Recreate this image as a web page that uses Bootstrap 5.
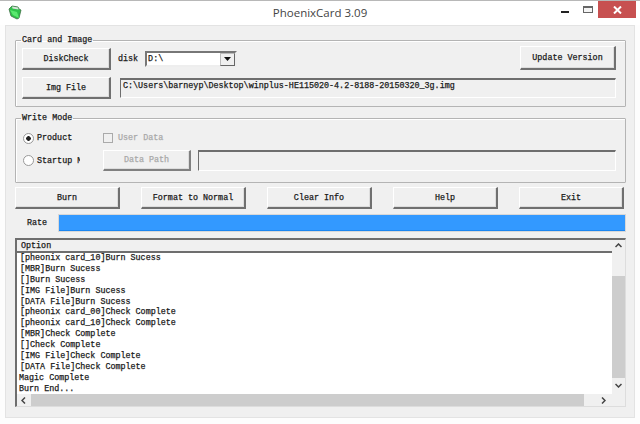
<!DOCTYPE html>
<html lang="en"><head><meta charset="utf-8"><title>PhoenixCard 3.09</title>
<link href="https://cdn.jsdelivr.net/npm/bootstrap@5.3.0/dist/css/bootstrap.min.css" rel="stylesheet">
<style>
html,body{width:640px;height:424px;overflow:hidden;background:#fdfdfd}
body{font:400 8.4px/10px "Liberation Mono",monospace;color:#1a1a1a;-webkit-text-stroke:.25px #1a1a1a}
.winframe{height:424px;border-top:1px solid #b8b8b8;display:flex;flex-direction:column}
.titlebar{height:24px;flex:none;background:#fff;-webkit-text-stroke:0}
.titlebar .side{flex:1 1 0}
.apptitle{font:400 11.5px/24px "Open Sans",sans-serif;color:#444}
.folder{margin:4px 0 0 8px}
.ctl-min{width:8px;height:2px;background:#222;margin:10px 14px 0 0}
.ctl-max{width:10px;height:7px;border:1px solid #666;border-top-width:2px;background:#f4f4f4;margin:5px 5px 0 0}
.ctl-close{width:38px;height:17px;background:#c75050;margin-right:4px;display:flex;align-items:center;justify-content:center}
.client{width:630px;height:393px;margin-left:5px;background:#f0f0f0;border:1px solid #e3e3e3;padding:10px 8px 0 9px;flex:none}
.grp{border:1px solid #b4b4b4;border-radius:1px;padding:0 9px 0 6px;margin:0;width:611px;box-shadow:inset 1px 1px 0 #fff}
.grp legend{float:none;width:auto;font:inherit;margin:0 0 0 -1px;padding:0 1px;line-height:9px}
.grp1{height:71px}
.grp2{height:69px;margin-top:7px}
.btn.winbtn{--bs-btn-padding-y:0;--bs-btn-padding-x:0;font:inherit;color:#1a1a1a;background:#f0f0f0;border:0;border-radius:0;border-top:1px solid #fff;border-left:1px solid #fff;border-right:2px solid #707070;border-bottom:2px solid #707070;height:22px;flex:none;display:flex;align-items:center;justify-content:center;box-shadow:inset -1px -1px 0 #ddd}
.btn.winbtn:disabled{color:#a9a9a9;-webkit-text-stroke-color:#a9a9a9;background:#f0f0f0;opacity:1;border-right-color:#808080;border-bottom-color:#808080;border-top-color:#fff;border-left-color:#fff}
.w-main{width:89px}
.w-ver{width:96px;height:24px!important;margin-top:-2px}
.combo{width:92px;height:16px;margin-left:7px;background:#fff;border:2px solid #777;border-right-color:#eee;border-bottom-color:#eee;display:flex;align-items:center;justify-content:space-between;padding-left:1px}
.combo .arrowbox{width:15px;height:13px;background:#f0f0f0;border:1px solid #bbb;border-right:1px solid #666;border-bottom:1px solid #666;display:flex;align-items:center;justify-content:center}
.sunken{background:#f0f0f0;border-top:2px solid #6e6e6e;border-left:1px solid #6e6e6e;border-right:1px solid #fff;border-bottom:1px solid #fff;height:20px;padding:1px 2px;flex:1 1 auto}
.disk{margin-left:7px}
.row1{margin-top:3px;height:22px}
.row2{margin-top:7px;height:22px}
.pathbox{margin:1px 0 0 9px}
.mode1{margin:7px 0 0 0;height:16px}
.mode2{margin-top:4px;height:21px}
.form-check-input.opt{width:11px;height:11px;margin:0 3px 0 1px;flex:none;border:1px solid #999;background:#fff none;box-shadow:none}
.form-check-input.opt[type=radio]:checked{background:radial-gradient(circle,#222 0 2px,#fff 2.6px);border-color:#999}
.form-check-input.opt[type=checkbox]{border-radius:0;opacity:1;width:10px;height:10px;background:#f0f0f0;border-color:#aaa;margin:0 5px 0 0}
.optcol{width:81px;flex:none}
.clipopt{width:58px;margin-right:23px;flex:none;overflow:hidden;white-space:nowrap}
.muted{color:#a9a9a9;-webkit-text-stroke-color:#a9a9a9}
.btn.w-dpath{width:88px;height:21px}
.pbox2{margin-left:7px;height:21px}
.actions{margin-top:4px;width:609px}
.btn.w-act{width:105px}
.ratebar{margin-top:5px;height:18px;width:611px}
.ratelabel{width:43px;padding-left:12px;flex:none}
.progress.rateprog{height:18px;flex:1 1 auto;border-radius:0;background:#f0f0f0;border:1px solid #d8d8d8}
.progress.rateprog .progress-bar{background:#3399ff;border-bottom:1px solid #1c86f0}
.logbox{margin-top:6px;width:611px;height:169px;border-top:2px solid #6e6e6e;border-left:2px solid #6e6e6e;border-right:1px solid #ddd;border-bottom:1px solid #ddd;display:grid;grid-template-columns:1fr 13px;grid-template-rows:1fr 12px}
.logmain{background:#fff;min-width:0;overflow:hidden}
.loghead{height:13px;background:#f0f0f0;border-bottom:2px solid #6e6e6e;padding-left:4px;line-height:12px}
.logline{line-height:10.9px;height:10.9px;padding-left:3px;white-space:nowrap}
.logline.flush{padding-left:2px}
.vscroll{background:#f0f0f0;display:flex;flex-direction:column;grid-row:1;grid-column:2;min-height:0;overflow:hidden}
.vscroll .arr{height:36px;display:flex;justify-content:center;align-items:flex-start;padding-top:3px;flex:none}
.vscroll .arr.down{height:16px;align-items:flex-end;padding-bottom:6px;padding-top:0}
.vscroll .thumb{background:#cdcdcd;height:102px;flex:none}
.hscroll{background:#f0f0f0;display:flex;align-items:stretch;grid-row:2;grid-column:1}
.hscroll .arr{display:flex;align-items:center;flex:none}
.hscroll .arr.first{width:14px}
.hscroll .arr.last{margin-left:auto;padding-right:6px}
.hscroll .thumb{background:#cdcdcd;width:553px;flex:none}
.hcorner{background:#f0f0f0;grid-row:2;grid-column:2}
</style></head>
<body>
<div class="winframe">
  <div class="titlebar d-flex">
    <div class="side">
      <svg class="folder" width="14" height="15" viewBox="0 0 14 15"><path d="M1 4 4 1l6 1 1 2 2 1-2 8-2 1-6-3z" fill="#2fc24a" stroke="#3f6f46" stroke-width=".8"/><path d="M2 5l7 2 2 6-6-3z" fill="#5be86f"/><path d="M4 1.500l6 1 .5 2-6-1z" fill="#d8e4da"/></svg>
    </div>
    <div class="apptitle">PhoenixCard 3.09</div>
    <div class="side d-flex justify-content-end">
      <div class="ctl-min"></div><div class="ctl-max"></div>
      <div class="ctl-close"><svg width="9" height="8" viewBox="0 0 9 8"><path d="M1 .5l7 7M8 .5l-7 7" stroke="#fff" stroke-width="2"/></svg></div>
    </div>
  </div>
  <div class="client">
    <fieldset class="grp grp1">
      <legend>Card and Image</legend>
      <div class="d-flex align-items-center row1">
        <button class="btn winbtn w-main" type="button">DiskCheck</button>
        <span class="disk">disk</span>
        <div class="combo"><span>D:\</span><span class="arrowbox"><svg width="7" height="4" viewBox="0 0 7 4"><path d="M0 0h7L3.500 4z" fill="#111"/></svg></span></div>
        <button class="btn winbtn w-ver ms-auto" type="button">Update Version</button>
      </div>
      <div class="d-flex row2">
        <button class="btn winbtn w-main" type="button">Img File</button>
        <div class="sunken pathbox">C:\Users\barneyp\Desktop\winplus-HE115020-4.2-8188-20150320_3g.img</div>
      </div>
    </fieldset>
    <fieldset class="grp grp2">
      <legend>Write Mode</legend>
      <div class="d-flex align-items-center mode1">
        <label class="d-flex align-items-center optcol"><input class="form-check-input opt" type="radio" name="m" checked>Product</label>
        <label class="d-flex align-items-center muted"><input class="form-check-input opt" type="checkbox" disabled>User Data</label>
      </div>
      <div class="d-flex align-items-center mode2">
        <label class="d-flex align-items-center clipopt"><input class="form-check-input opt" type="radio" name="m">Startup Mode</label>
        <button class="btn winbtn w-dpath" type="button" disabled>Data Path</button>
        <div class="sunken pbox2"></div>
      </div>
    </fieldset>
    <div class="d-flex justify-content-between actions">
      <button class="btn winbtn w-act" type="button">Burn</button>
      <button class="btn winbtn w-act" type="button">Format to Normal</button>
      <button class="btn winbtn w-act" type="button">Clear Info</button>
      <button class="btn winbtn w-act" type="button">Help</button>
      <button class="btn winbtn w-act" type="button">Exit</button>
    </div>
    <div class="d-flex align-items-center ratebar">
      <div class="ratelabel">Rate</div>
      <div class="progress rateprog"><div class="progress-bar w-100"></div></div>
    </div>
    <div class="logbox">
      <div class="logmain">
        <div class="loghead">Option</div>
        <div class="logline">[pheonix card_10]Burn Sucess</div>
        <div class="logline">[MBR]Burn Sucess</div>
        <div class="logline">[]Burn Sucess</div>
        <div class="logline">[IMG File]Burn Sucess</div>
        <div class="logline">[DATA File]Burn Sucess</div>
        <div class="logline">[pheonix card_00]Check Complete</div>
        <div class="logline">[pheonix card_10]Check Complete</div>
        <div class="logline">[MBR]Check Complete</div>
        <div class="logline">[]Check Complete</div>
        <div class="logline">[IMG File]Check Complete</div>
        <div class="logline">[DATA File]Check Complete</div>
        <div class="logline flush">Magic Complete</div>
        <div class="logline flush">Burn End...</div>
      </div>
      <div class="vscroll">
        <div class="arr"><svg width="7" height="5" viewBox="0 0 7 5"><path d="M.5 4 3.500 1l3 3" fill="none" stroke="#444" stroke-width="1.500"/></svg></div>
        <div class="thumb"></div>
        <div class="arr down"><svg width="7" height="5" viewBox="0 0 7 5"><path d="M.5 1l3 3 3-3" fill="none" stroke="#444" stroke-width="1.500"/></svg></div>
      </div>
      <div class="hscroll">
        <div class="arr first ps-1"><svg width="5" height="7" viewBox="0 0 5 7"><path d="M4 .5 1 3.500l3 3" fill="none" stroke="#444" stroke-width="1.500"/></svg></div>
        <div class="thumb"></div>
        <div class="arr last"><svg width="5" height="7" viewBox="0 0 5 7"><path d="M1 .5l3 3-3 3" fill="none" stroke="#444" stroke-width="1.500"/></svg></div>
      </div>
      <div class="hcorner"></div>
    </div>
  </div>
</div>
</body></html>
